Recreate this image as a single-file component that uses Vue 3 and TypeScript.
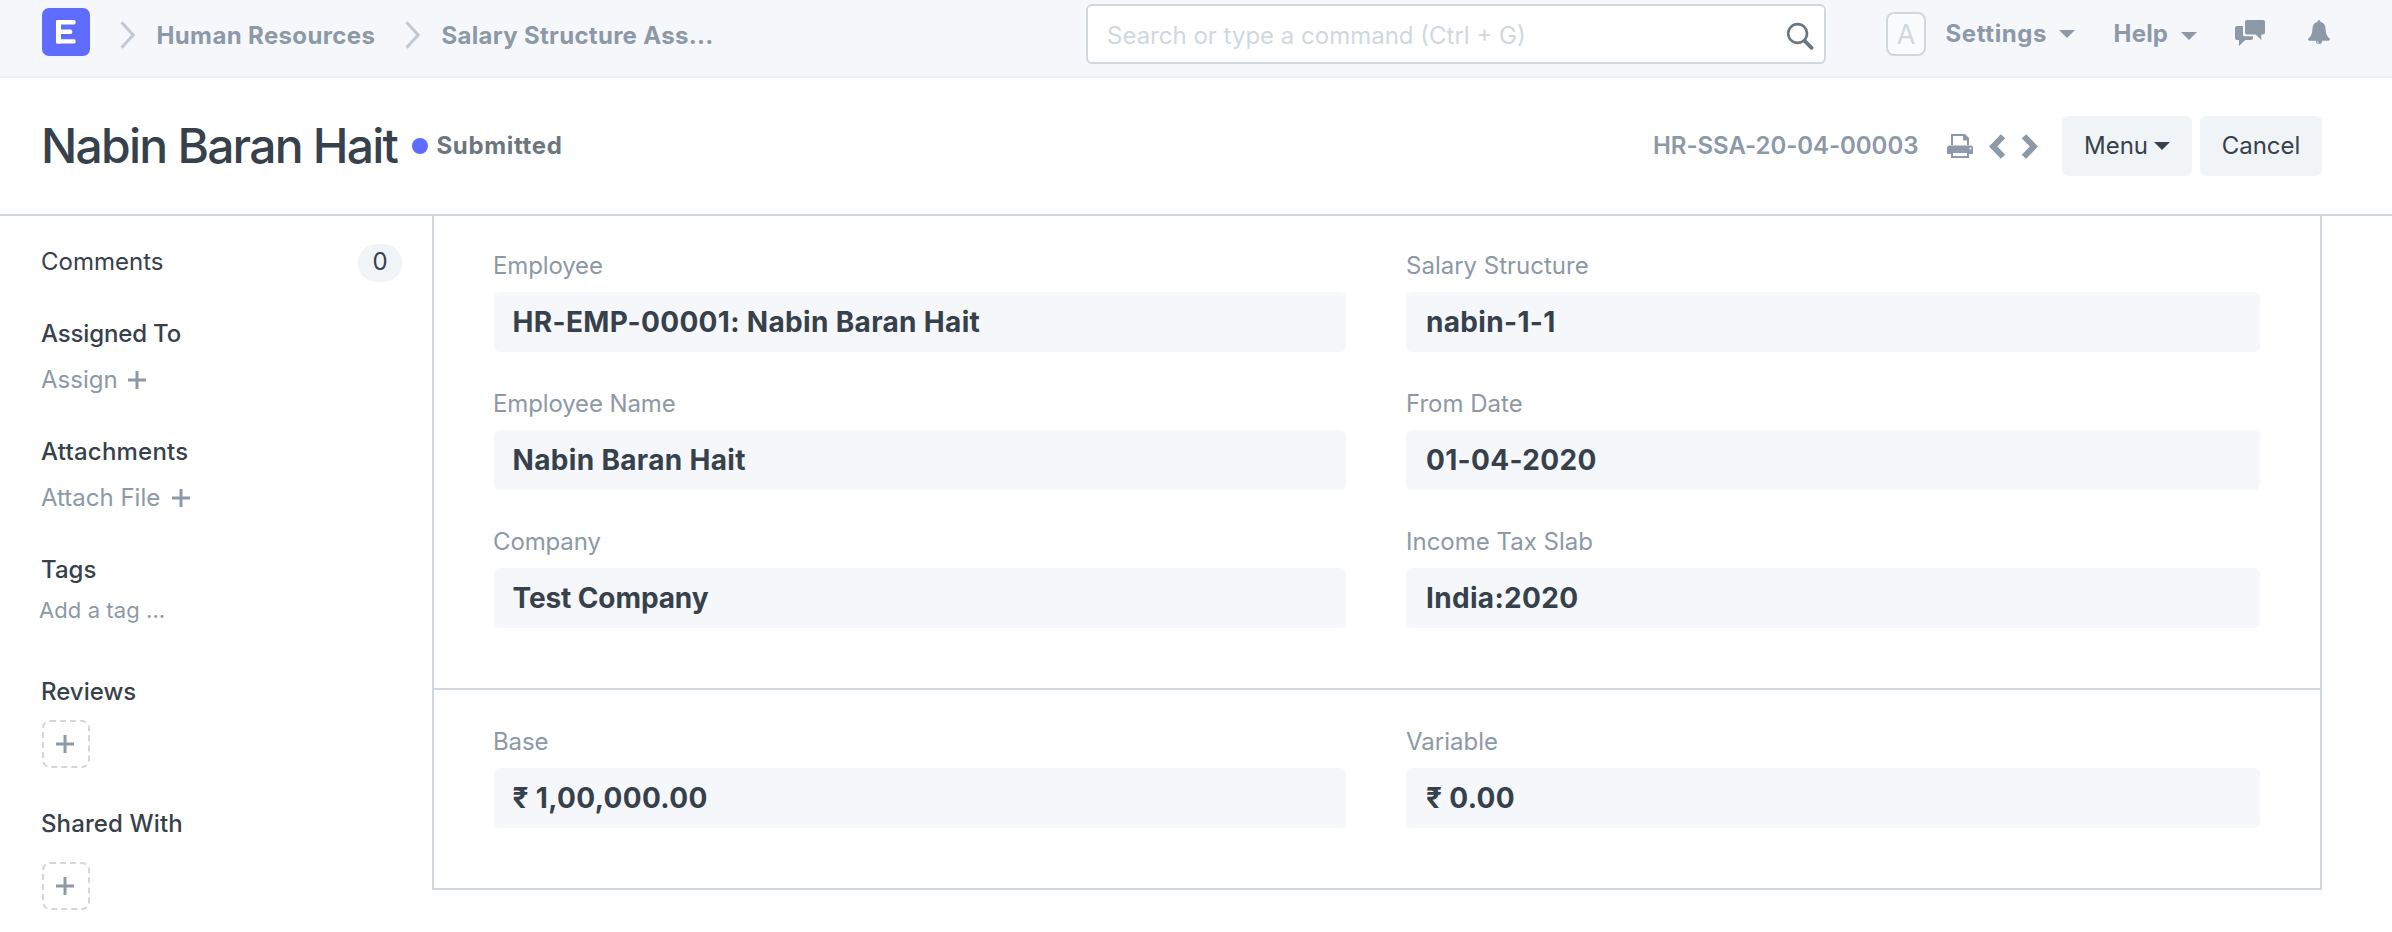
<script setup lang="ts">
interface Field {
  label: string
  value: string
  tone?: string
}

const sections: Field[][] = [
  [
    { label: 'Employee', value: 'HR-EMP-00001: Nabin Baran Hait' },
    { label: 'Salary Structure', value: 'nabin-1-1' },
    { label: 'Employee Name', value: 'Nabin Baran Hait' },
    { label: 'From Date', value: '01-04-2020' },
    { label: 'Company', value: 'Test Company', tone: 'snug' },
    { label: 'Income Tax Slab', value: 'India:2020' },
  ],
  [
    { label: 'Base', value: '₹ 1,00,000.00' },
    { label: 'Variable', value: '₹ 0.00' },
  ],
]

const crumbs: string[] = ['Human Resources', 'Salary Structure Ass...']
</script>

<template>
  <div class="page">
    <header class="navbar">
      <svg class="logo" viewBox="0 0 48 48" width="48" height="48">
        <rect width="48" height="48" rx="7" fill="#606bff" />
        <g fill="#fff">
          <rect x="14" y="12" width="5" height="23.6" rx="1.4" />
          <rect x="14" y="12" width="19.6" height="4.4" rx="1.6" />
          <rect x="14" y="21.6" width="16.2" height="4.4" rx="1.6" />
          <rect x="14" y="31.2" width="19.6" height="4.4" rx="1.6" />
        </g>
      </svg>
      <nav class="crumbs">
        <template v-for="(crumb, i) in crumbs" :key="crumb">
          <svg class="sep" viewBox="0 0 16 28" width="16" height="28">
            <path d="M1.5 1.2L13.2 14L1.5 26.8" fill="none" stroke="#c0c9d1" stroke-width="3" />
          </svg>
          <a class="crumb" :class="'crumb-' + i">{{ crumb }}</a>
        </template>
      </nav>

      <div class="search">
        <span class="placeholder">Search or type a command (Ctrl + G)</span>
        <svg viewBox="0 0 28 28" width="28" height="28" fill="none" stroke="#6c7680">
          <circle cx="11.6" cy="11.5" r="9.4" stroke-width="2.6" />
          <path d="M18.6 18.8L25.6 25.8" stroke-width="3.8" stroke-linecap="round" />
        </svg>
      </div>

      <div class="avatar">A</div>
      <a class="nav-link settings">Settings</a>
      <svg class="caret" viewBox="0 0 16 8" width="16" height="8"><path d="M0 0H16L8 8Z" /></svg>
      <a class="nav-link help">Help</a>
      <svg class="caret low" viewBox="0 0 16 8" width="16" height="8"><path d="M0 0H16L8 8Z" /></svg>
      <svg class="chat" viewBox="0 0 30 26" width="30" height="26" fill="#8d99a6">
        <path d="M2 6H8V14.5Q8 16.3 9.8 16.3H18V18.2Q17.6 20 16 20H10.3L4 26V20H2Q0 20 0 18V8Q0 6 2 6Z" />
        <path d="M12 0H28Q30 0 30 2V12.5Q30 14.5 28 14.5H26.3V20L20.5 14.5H12Q10 14.5 10 12.5V2Q10 0 12 0Z" />
      </svg>
      <svg class="bell" viewBox="0 0 22 24" width="22" height="24" fill="#8d99a6">
        <path d="M11 0Q12.4 0 12.4 1.7Q17.6 3 17.6 9Q17.6 15.5 22 19Q22 20.8 20.4 20.8H14.2Q14 24 11 24Q8 24 7.8 20.8H1.6Q0 20.8 0 19Q4.4 15.5 4.4 9Q4.4 3 9.6 1.7Q9.6 0 11 0Z" />
        <path d="M8.9 20.9Q9.1 22.8 11 22.9" fill="none" stroke="#f5f7fb" stroke-width=".7" />
      </svg>
    </header>

    <div class="page-head">
      <h1>Nabin Baran Hait</h1>
      <span class="dot"></span>
      <span class="status">Submitted</span>
      <span class="doc-id">HR-SSA-20-04-00003</span>
      <svg class="print" viewBox="0 0 26 24" width="26" height="24">
        <path d="M5 11V1H17L21 5V11" fill="none" stroke="#8d99a6" stroke-width="2" />
        <path d="M16 0H18L22 4V6.5H16Z" fill="#8d99a6" />
        <path d="M2.5 11.5H23.5Q26 11.5 26 14V20H0V14Q0 11.5 2.5 11.5Z" fill="#8d99a6" />
        <rect x="5" y="18" width="16" height="5" fill="#fff" stroke="#8d99a6" stroke-width="2" />
        <circle cx="23.4" cy="14.4" r="1" fill="#fff" />
      </svg>
      <svg class="prev" viewBox="0 0 16 25" width="16" height="25" fill="none" stroke="#8d99a6" stroke-width="6">
        <path d="M14 2.2L4.2 12.5L14 22.8" />
      </svg>
      <svg class="next" viewBox="0 0 16 25" width="16" height="25" fill="none" stroke="#8d99a6" stroke-width="6">
        <path d="M2 2.2L11.8 12.5L2 22.8" />
      </svg>
      <button class="btn menu" type="button">
        <span>Menu</span>
        <svg viewBox="0 0 16 8" width="16" height="8"><path d="M0 0H16L8 8Z" fill="#36414c" /></svg>
      </button>
      <button class="btn cancel" type="button"><span>Cancel</span></button>
    </div>

    <div class="body">
      <aside class="sidebar">
        <div class="row comments"><span>Comments</span><span class="badge">0</span></div>
        <div class="row heading assigned">Assigned To</div>
        <div class="row action assign">
          <span>Assign</span>
          <svg class="plus" viewBox="0 0 18 18" width="18" height="18"><path d="M9 0V18M0 9H18" /></svg>
        </div>
        <div class="row heading attachments">Attachments</div>
        <div class="row action">
          <span>Attach File</span>
          <svg class="plus" viewBox="0 0 18 18" width="18" height="18"><path d="M9 0V18M0 9H18" /></svg>
        </div>
        <div class="row heading tags">Tags</div>
        <div class="row add-tag">Add a tag ...</div>
        <div class="row heading reviews">Reviews</div>
        <div class="add-box">
          <svg class="plus" viewBox="0 0 18 18" width="18" height="18"><path d="M9 0V18M0 9H18" /></svg>
        </div>
        <div class="row heading shared">Shared With</div>
        <div class="add-box second">
          <svg class="plus" viewBox="0 0 18 18" width="18" height="18"><path d="M9 0V18M0 9H18" /></svg>
        </div>
      </aside>

      <main class="form">
        <section v-for="(fields, s) in sections" :key="s" class="section">
          <div v-for="field in fields" :key="field.label" class="field">
            <label>{{ field.label }}</label>
            <div class="value" :class="field.tone">{{ field.value }}</div>
          </div>
        </section>
      </main>
    </div>
  </div>
</template>

<style>
body {
  margin: 0;
  background: #fff;
}
</style>

<style scoped>
.page {
  width: 2392px;
  height: 932px;
  overflow: hidden;
  background: #fff;
  color: #36414c;
  font-family: Inter, "Noto Sans", sans-serif;
  font-size: 24px;
  line-height: 30px;
}
.page * {
  box-sizing: border-box;
}
svg {
  display: block;
  flex: none;
}

/* Top bar */
.navbar {
  display: flex;
  align-items: flex-start;
  height: 78px;
  padding-left: 42px;
  background: #f5f7fb;
  border-bottom: 2px solid #ebeff2;
  white-space: nowrap;
}
.logo {
  margin-top: 8px;
}
.crumbs {
  display: flex;
  width: 996px;
}
.sep {
  margin: 20.5px 20.5px 0 30px;
}
.crumb {
  width: 218.5px;
  margin-top: 21px;
  color: #8d99a6;
  font-weight: 700;
  letter-spacing: 0.37px;
}
.crumb-1 {
  width: auto;
  letter-spacing: 0.3px;
}
.search {
  display: flex;
  align-items: flex-start;
  justify-content: space-between;
  width: 740px;
  height: 60px;
  margin-top: 4px;
  padding: 15px 10px 0 19px;
  background: #fff;
  border: 2px solid #d1d8dd;
  border-radius: 6px;
}
.search svg {
  margin-top: 1px;
}
.placeholder {
  color: #d1d8dd;
}
.avatar {
  width: 40px;
  height: 44px;
  margin: 12px 0 0 60px;
  border: 2px solid #d1d8dd;
  border-radius: 8px;
  background: #fafbfc;
  color: #d1d8dd;
  font-size: 27px;
  line-height: 41px;
  text-align: center;
}
.nav-link {
  margin-top: 19px;
  color: #8d99a6;
  font-weight: 700;
}
.settings {
  width: 113px;
  margin-left: 19.5px;
  letter-spacing: 0.6px;
}
.help {
  width: 67px;
  margin-left: 39px;
  letter-spacing: 0.2px;
}
.caret {
  margin-top: 30px;
  fill: #8d99a6;
}
.caret.low {
  margin-top: 32px;
}
.chat {
  margin: 20px 0 0 38px;
}
.bell {
  margin: 19.5px 0 0 43px;
}

/* Document title bar */
.page-head {
  display: flex;
  align-items: center;
  height: 138px;
  padding-left: 41px;
  padding-right: 70px;
  border-bottom: 2px solid #d1d8dd;
  white-space: nowrap;
}
h1 {
  width: 371px;
  margin: 0;
  font-size: 48px;
  font-weight: 500;
  line-height: 60px;
  letter-spacing: -1.77px;
}
.dot {
  width: 16px;
  height: 16px;
  border-radius: 50%;
  background: #606bff;
}
.status {
  margin-left: 8.5px;
  color: #6c7680;
  font-weight: 700;
  letter-spacing: 0.66px;
}
.doc-id {
  width: 294px;
  margin-left: auto;
  color: #8d99a6;
  font-weight: 600;
  letter-spacing: -0.06px;
}
.prev {
  margin-left: 16px;
}
.next {
  margin-left: 17px;
}
.btn {
  display: flex;
  align-items: center;
  height: 60px;
  padding: 0;
  border: 0;
  border-radius: 6px;
  background: #f0f4f7;
  color: #36414c;
  font: 400 24px/30px Inter, sans-serif;
}
.menu {
  width: 130px;
  margin-left: 24px;
  padding-left: 22px;
  gap: 6px;
}
.cancel {
  justify-content: center;
  width: 122px;
  margin-left: 8px;
}

/* Body */
.body {
  display: flex;
}
.sidebar {
  width: 432px;
  padding: 28px 0 0 41px;
}
.row {
  height: 38px;
  line-height: 38px;
}
.comments {
  display: flex;
  justify-content: space-between;
  width: 361px;
  line-height: 36px;
}
.badge {
  width: 44px;
  height: 38px;
  margin-left: auto;
  border-radius: 19px;
  background: #f0f4f7;
  text-align: center;
}
.heading {
  font-weight: 500;
}
.assigned {
  margin-top: 33px;
  letter-spacing: -0.15px;
}
.attachments {
  margin-top: 34px;
  letter-spacing: 0.23px;
}
.action {
  display: flex;
  align-items: center;
  gap: 11.5px;
  margin-top: 8px;
  color: #8d99a6;
}
.assign {
  gap: 10px;
}
.tags {
  margin-top: 34px;
}
.plus {
  fill: none;
  stroke: #8d99a6;
  stroke-width: 3;
}
.add-tag {
  margin: 2px 0 0 -2px;
  color: #8d99a6;
  font-size: 22px;
  letter-spacing: 0.08px;
}
.reviews {
  margin-top: 44px;
}
.add-box {
  display: flex;
  align-items: center;
  justify-content: center;
  width: 48px;
  height: 48px;
  margin: 9px 0 0 1px;
  padding-right: 2px;
  border: 2px dashed #d1d8dd;
  border-radius: 8px;
}
.shared {
  margin-top: 37px;
  letter-spacing: 0.12px;
}
.add-box.second {
  margin-top: 19px;
}

.form {
  width: 1890px;
  height: 674px;
  border: 2px solid #d1d8dd;
  border-top: 0;
}
.section {
  display: grid;
  grid-template-columns: 852px 854px;
  column-gap: 60px;
  row-gap: 32px;
  padding: 30px 60px 60px;
}
.section + .section {
  padding-top: 32px;
  border-top: 2px solid #d1d8dd;
}
.section:first-child {
  height: 472px;
}
.field {
  height: 106px;
}
.field label {
  display: block;
  height: 46px;
  padding-top: 5px;
  color: #8d99a6;
}
.field:nth-child(odd) label {
  margin-left: -1px;
  letter-spacing: -0.13px;
}
.value {
  height: 60px;
  padding-left: 18.5px;
  border-radius: 6px;
  background: #f5f7fb;
  font-size: 28px;
  font-weight: 700;
  line-height: 60px;
  letter-spacing: 0.33px;
}
.field:nth-child(even) .value {
  padding-left: 20px;
}
.value.snug {
  letter-spacing: -0.1px;
}
</style>
